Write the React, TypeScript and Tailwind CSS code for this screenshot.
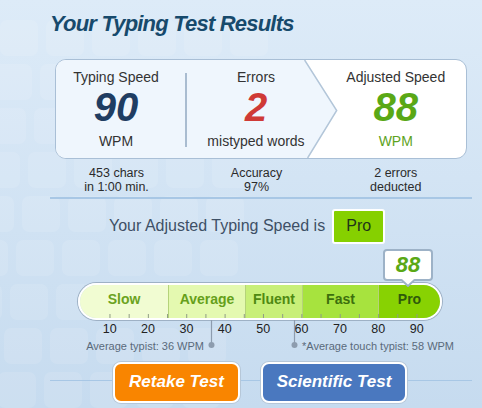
import React from 'react'

const segments = [
    { label: 'Slow', w: 'w-[88px]', bg: 'bg-[#f1fcd2]', text: 'text-[#6ba31e]' },
    { label: 'Average', w: 'w-[77px]', bg: 'bg-[#e4f9b0]', text: 'text-[#66a01a]' },
    { label: 'Fluent', w: 'w-[57px]', bg: 'bg-[#c8ef78]', text: 'text-[#4f8912]' },
    { label: 'Fast', w: 'w-[76px]', bg: 'bg-[#a7e33e]', text: 'text-[#3d6f0d]' },
    { label: 'Pro', w: 'w-[62px]', bg: 'bg-[#88d202]', text: 'text-[#2f5a0b]' },
]

const scale = [10, 20, 30, 40, 50, 60, 70, 80, 90]

// px along the bar for a given wpm (bar inner starts at x=80)
const tickX = (u: number) => 71.6 + 3.8375 * u - 80

function KeyPattern() {
    const keys = []
    for (let r = 0; r < 9; r++) {
        for (let c = 0; c < 6; c++) {
            keys.push(
                <rect key={`${r}-${c}`} x={c * 46 - r * 6} y={r * 44 + 20} width={38} height={36} rx={7} fill="#ffffff" />
            )
        }
    }
    return (
        <svg className="absolute left-0 top-0 pointer-events-none" width="300" height="408" opacity="0.11">
            {keys}
        </svg>
    )
}

function StatCard() {
    return (
        <div className="relative ml-[55px] w-[412px] h-[100px] rounded-[11px] border-[1.5px] border-[#a9bfd6] bg-white overflow-hidden">
            <svg className="absolute inset-0" width="100%" height="100%" viewBox="0 0 409 97" preserveAspectRatio="none">
                <polygon points="0,0 248,0 280,50 251,97 0,97" fill="#eff6fd" />
                <polyline points="248,0 280,50 251,97" fill="none" stroke="#b3c6d9" strokeWidth="1.5" />
            </svg>
            <div className="relative grid grid-cols-[120px_9px_1.5px_139px_1fr] h-full text-[#333]">
                <div className="flex flex-col items-center pt-[9px]">
                    <span className="text-[14px] leading-[16px]">Typing Speed</span>
                    <span className="mt-[2px] text-[40px] leading-[40px] font-bold italic text-[#1f3d62]">90</span>
                    <span className="mt-[6px] text-[14px] leading-[16px]">WPM</span>
                </div>
                <div />
                <div className="self-center mt-[2px] h-[74px] bg-[#a9bcd0]" />
                <div className="flex flex-col items-center pt-[9px]">
                    <span className="text-[14px] leading-[16px]">Errors</span>
                    <span className="mt-[2px] text-[40px] leading-[40px] font-bold italic text-[#cf3a36]">2</span>
                    <span className="mt-[6px] text-[14px] leading-[16px]">mistyped words</span>
                </div>
                <div className="flex flex-col items-center pt-[9px]">
                    <span className="text-[14px] leading-[16px]">Adjusted Speed</span>
                    <span className="mt-[2px] text-[40px] leading-[40px] font-bold italic text-[#5aa816]">88</span>
                    <span className="mt-[6px] text-[14px] leading-[16px] text-[#5ea31e]">WPM</span>
                </div>
            </div>
        </div>
    )
}

function SpeedBar() {
    return (
        <div className="relative">
            <div className="ml-[78px] w-[364px] h-[37px] rounded-full border-2 border-white shadow-[0_0_0_1px_#9eb1c5] overflow-hidden flex relative">
                {segments.map((s, i) => (
                    <div
                        key={s.label}
                        className={`${s.w} ${s.bg} h-full flex items-center justify-center pb-[4px] ${i > 0 ? 'border-l border-[#b5d37a]' : ''}`}
                    >
                        <span className={`text-[14px] font-bold ${s.text}`}>{s.label}</span>
                    </div>
                ))}
                <svg className="absolute left-0 bottom-0" width="360" height="6">
                    {Array.from({ length: 17 }, (_, i) => 10 + i * 5).map((u) => (
                        <line key={u} x1={tickX(u)} x2={tickX(u)} y1={2} y2={6} stroke="#8f9c85" strokeWidth="1" />
                    ))}
                </svg>
            </div>
            <div className="flex ml-[90.5px] mt-[2px] h-[14px] text-[12.5px] leading-[14px] text-[#222]">
                {scale.map((n) => (
                    <span key={n} className="w-[38.375px] text-center shrink-0">{n}</span>
                ))}
            </div>
            <div className="flex mt-[3px] h-[14px] text-[11px] leading-[14px] text-[#5a6a7b]">
                <span className="w-[204px] text-right">Average typist: 36 WPM</span>
                <span className="ml-[98px]">*Average touch typist: 58 WPM</span>
            </div>
            <svg className="absolute left-0 top-0 pointer-events-none" width="482" height="70">
                <line x1="211.5" x2="211.5" y1="37" y2="62" stroke="#8d9cae" strokeWidth="1.2" />
                <circle cx="211.5" cy="62" r="3" fill="#8d9cae" />
                <line x1="294.5" x2="294.5" y1="37" y2="62" stroke="#8d9cae" strokeWidth="1.2" />
                <circle cx="294.5" cy="62" r="3" fill="#8d9cae" />
            </svg>
        </div>
    )
}

export default function App() {
    return (
        <div className="relative w-[482px] h-[408px] overflow-hidden bg-gradient-to-b from-[#ddebf8] to-[#c6dbef] font-['Liberation_Sans',Arial,sans-serif]">
            <KeyPattern />
            <div className="relative">
                <h1 className="pt-[10px] pl-[50px] h-[59px] text-[22px] leading-[28px] font-bold italic tracking-[-0.8px] text-[#174a6c]">
                    Your Typing Test Results
                </h1>
                <StatCard />
                <div className="ml-[56.5px] w-[409px] mt-[7px] grid grid-cols-[120px_10.5px_139px_1fr] text-[12.5px] leading-[14px] text-[#2b2b2b] text-center">
                    <div>453 chars<br />in 1:00 min.</div>
                    <div />
                    <div>Accuracy<br />97%</div>
                    <div>2 errors<br />deducted</div>
                </div>
                <div className="mt-[3px] ml-[50px] w-[422px] h-[1.5px] bg-[#a8c7e5]" />
                <div className="mt-[10px] ml-[109px] flex items-center gap-[7px]">
                    <span className="text-[16px] text-[#3e5066]">Your Adjusted Typing Speed is</span>
                    <span className="w-[53px] h-[35px] flex items-center justify-center bg-[#86d000] border-2 border-white rounded-[3px] text-[16px] text-[#1f3518]">
                        Pro
                    </span>
                </div>
                <div className="relative z-10 mt-[5px] ml-[383px] w-[50px] h-[32px] bg-white border-2 border-[#9db2c7] rounded-[4px] flex items-center justify-center">
                    <span className="text-[22px] leading-[22px] font-bold italic text-[#5aa816]">88</span>
                    <svg className="absolute left-[16px] top-[28px]" width="14" height="8">
                        <polygon points="0,0 7,7 14,0" fill="#ffffff" />
                        <polyline points="0,0.5 7,7 14,0.5" fill="none" stroke="#9db2c7" strokeWidth="2" />
                    </svg>
                </div>
                <div className="mt-[2px]">
                    <SpeedBar />
                </div>
                <div className="relative mt-[9px] h-[41px] flex">
                    <div className="absolute left-[50px] top-[18px] w-[422px] h-[1.5px] bg-[#a8c7e5]" />
                    <button className="relative ml-[113px] w-[127px] h-[41px] rounded-[8px] border-2 border-white shadow-[0_0_0_1px_#b6c7d8] bg-[#f98500] text-white text-[17px] font-bold italic">
                        Retake Test
                    </button>
                    <button className="relative ml-[21px] w-[146px] h-[41px] rounded-[8px] border-2 border-white shadow-[0_0_0_1px_#b6c7d8] bg-[#4a78bf] text-white text-[17px] font-bold italic">
                        Scientific Test
                    </button>
                </div>
            </div>
        </div>
    )
}
